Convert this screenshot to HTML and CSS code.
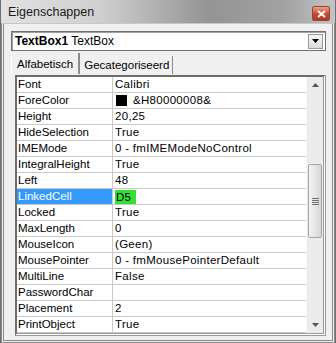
FILE: index.html
```html
<!DOCTYPE html>
<html lang="nl">
<head>
    <meta charset="UTF-8">
    <title>Eigenschappen</title>
    <link rel="stylesheet" href="styles.css">
</head>
<body>
    <div class="window">
        <div class="titlebar">
            <span class="title">Eigenschappen</span>
            <span class="close">
                <svg width="9" height="8" viewBox="0 0 9 8"><path d="M1 1 L8 7 M8 1 L1 7" stroke="#fff" stroke-width="2"/></svg>
            </span>
        </div>
        <div class="body">
            <div class="combo">
                <span class="combo-text"><b>TextBox1</b> TextBox</span>
                <span class="combo-btn">
                    <svg width="7" height="4" viewBox="0 0 7 4"><path d="M0 0 H7 L3.5 4 Z" fill="#000"/></svg>
                </span>
            </div>
            <div class="tabs">
                <span class="tab active">Alfabetisch</span>
                <span class="tab">Gecategoriseerd</span>
            </div>
            <div class="grid">
                <div class="rows">
                    <div class="row"><span class="name">Font</span><span class="value">Calibri</span></div>
                    <div class="row"><span class="name">ForeColor</span><span class="value"><i class="swatch"></i>&amp;H80000008&amp;</span></div>
                    <div class="row"><span class="name">Height</span><span class="value">20,25</span></div>
                    <div class="row"><span class="name">HideSelection</span><span class="value">True</span></div>
                    <div class="row"><span class="name">IMEMode</span><span class="value">0 - fmIMEModeNoControl</span></div>
                    <div class="row"><span class="name">IntegralHeight</span><span class="value">True</span></div>
                    <div class="row"><span class="name">Left</span><span class="value">48</span></div>
                    <div class="row selected"><span class="name">LinkedCell</span><span class="value"><span class="mark">D5</span></span></div>
                    <div class="row"><span class="name">Locked</span><span class="value">True</span></div>
                    <div class="row"><span class="name">MaxLength</span><span class="value">0</span></div>
                    <div class="row"><span class="name">MouseIcon</span><span class="value">(Geen)</span></div>
                    <div class="row"><span class="name">MousePointer</span><span class="value">0 - fmMousePointerDefault</span></div>
                    <div class="row"><span class="name">MultiLine</span><span class="value">False</span></div>
                    <div class="row"><span class="name">PasswordChar</span><span class="value"></span></div>
                    <div class="row"><span class="name">Placement</span><span class="value">2</span></div>
                    <div class="row"><span class="name">PrintObject</span><span class="value">True</span></div>
                </div>
                <div class="scrollbar">
                    <span class="arrow">
                        <svg width="7" height="4" viewBox="0 0 7 4"><path d="M0 4 H7 L3.5 0 Z" fill="#555"/></svg>
                    </span>
                    <div class="track">
                        <div class="thumb"><i></i><i></i><i></i><i></i></div>
                    </div>
                    <span class="arrow">
                        <svg width="7" height="4" viewBox="0 0 7 4"><path d="M0 0 H7 L3.5 4 Z" fill="#555"/></svg>
                    </span>
                </div>
            </div>
        </div>
    </div>
</body>
</html>
```

FILE: styles.css
```css
body {
    margin: 0;
    background-color: #fff;
    font-family: "Liberation Sans", Arial, sans-serif;
    font-size: 11.5px;
}

.window {
    width: 336px;
    height: 343px;
    box-sizing: border-box;
    display: flex;
    flex-direction: column;
    background-color: #f0f0f0;
    border: 1px solid #6f6f6f;
    border-top: none;
}

.titlebar {
    height: 23px;
    flex-shrink: 0;
    display: flex;
    align-items: center;
    justify-content: space-between;
    padding: 0 5px 0 7px;
    background: linear-gradient(to right, #e2e2e2 0%, #cfcfcf 30%, #949494 62%, #a2a2a2 85%, #c4c4c4 100%);
}

.title {
    font-size: 12.5px;
    color: #1a1a1a;
}

.close {
    width: 16px;
    height: 13px;
    margin-top: 4px;
    display: flex;
    align-items: center;
    justify-content: center;
    border: 1px solid #8a4a3a;
    border-radius: 2px;
    background: linear-gradient(#e8a08c, #c8472d 55%, #b53a22);
}

.body {
    flex: 1;
    display: flex;
    flex-direction: column;
    padding: 7px 4px 4px 3px;
    border: 3px double #8a8a8a;
    border-top: 1px solid #c8c8c8;
}

.combo {
    height: 18px;
    margin: 0 2px 0 4px;
    display: flex;
    align-items: center;
    justify-content: space-between;
    background-color: #fff;
    border: 1px solid #707070;
    box-shadow: inset 1px 1px 0 #a0a0a0;
    font-size: 12px;
}

.combo-text {
    padding-left: 3px;
}

.combo-btn {
    width: 13px;
    height: 13px;
    margin-right: 2px;
    display: flex;
    align-items: center;
    justify-content: center;
    background: linear-gradient(#f6f6f6, #dcdcdc);
    border: 1px solid #9a9a9a;
}

.tabs {
    display: flex;
    height: 21px;
    margin: 2px 0 0 4px;
    align-items: flex-end;
}

.tab {
    height: 18px;
    padding: 0 3px 0 4px;
    display: flex;
    align-items: center;
    font-size: 11.5px;
    border-right: 1px solid #8c8c8c;
}

.tab.active {
    height: 21px;
    padding: 0 5px 0 5px;
    border-left: 1px solid #fff;
    border-right: 2px solid #8c8c8c;
}

.grid {
    flex: 1;
    display: flex;
    margin: 1px 2px 0 8px;
    overflow: hidden;
    background-color: #fff;
    border-top: 2px solid #6d6d6d;
    border-left: 2px solid #6d6d6d;
    border-right: 3px double #9a9a9a;
    border-bottom: 3px double #9a9a9a;
}

.rows {
    flex: 1;
    overflow: hidden;
}

.row {
    display: flex;
    height: 15px;
    line-height: 15px;
    border-bottom: 1px solid #c9c9c9;
    white-space: nowrap;
}

.name {
    width: 94px;
    padding-left: 1px;
    border-right: 1px solid #c9c9c9;
}

.value {
    flex: 1;
    padding-left: 2px;
    display: flex;
    align-items: center;
    letter-spacing: 0.3px;
}

.swatch {
    width: 11px;
    height: 11px;
    margin: 0 6px 0 1px;
    background-color: #000;
}

.selected .name {
    background-color: #3399ff;
    color: #fff;
}

.mark {
    background-color: #33e033;
    padding: 0 5px 0 1px;
    line-height: 14px;
}

.scrollbar {
    width: 16px;
    display: flex;
    flex-direction: column;
    background-color: #ececec;
    border-left: 1px solid #f8f8f8;
}

.arrow {
    height: 16px;
    display: flex;
    align-items: center;
    justify-content: center;
}

.track {
    flex: 1;
    padding-top: 71px;
}

.thumb {
    height: 74px;
    margin: 0 1px;
    box-sizing: border-box;
    border: 1px solid #a5a5a5;
    border-radius: 2px;
    background: linear-gradient(to right, #f3f3f3, #e2e2e2 60%, #d6d6d6);
    display: flex;
    flex-direction: column;
    align-items: center;
    justify-content: center;
    gap: 1px;
}

.thumb i {
    width: 7px;
    height: 1px;
    background-color: #6f6f6f;
}
```
